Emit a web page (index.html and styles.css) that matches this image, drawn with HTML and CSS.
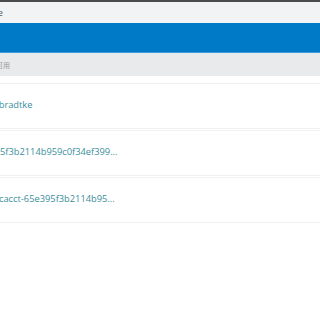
FILE: index.html
```html
<!DOCTYPE html>
<html lang="zh-CN">
<head>
  <meta charset="UTF-8">
  <meta name="viewport" content="width=device-width, initial-scale=1.0">
  <title>Accounts</title>
  <link rel="stylesheet" href="styles.css">
</head>

<body>
  <div class="window-edge"></div>
  <div class="title-bar">
    <span class="title">Service</span>
  </div>
  <div class="nav-bar"></div>
  <div class="sub-bar">
    <span class="hint">可用</span>
  </div>

  <ul class="account-list">
    <li class="account">
      <span class="account-name name-1">hbradtke</span>
    </li>
    <li class="account">
      <span class="account-name name-2">5f3b2114b959c0f34ef399...</span>
    </li>
    <li class="account">
      <span class="account-name name-3">cacct-65e395f3b2114b95...</span>
    </li>
  </ul>
</body>
</html>
```

FILE: styles.css
```css
* {
  margin: 0;
  padding: 0;
  box-sizing: border-box;
}

body {
  font-family: 'Open Sans', 'Noto Sans CJK SC', sans-serif;
  background-color: #fff;
  width: 320px;
  height: 320px;
  overflow: hidden;
}

.window-edge {
  height: 2px;
  background-color: #4b4b4b;
}

.title-bar {
  height: 21px;
  background-color: #f2f3f5;
  display: flex;
  align-items: center;
  overflow: hidden;
}

.title {
  font-size: 9px;
  color: #555;
  margin-left: -27px;
  white-space: nowrap;
}

.nav-bar {
  height: 30px;
  background-color: #0079c6;
  border-bottom: 1px solid #3d9bd9;
}

.sub-bar {
  height: 23px;
  background-color: #e9eaec;
  display: flex;
  align-items: center;
  overflow: hidden;
}

.hint {
  font-size: 7px;
  color: #9a9a9a;
  margin-left: -4px;
  white-space: nowrap;
}

.account-list {
  list-style: none;
  margin-top: 7px;
}

.account {
  height: 46px;
  padding-bottom: 3px;
  border-top: 1px solid #efefef;
  border-bottom: 1px solid #efefef;
  display: flex;
  align-items: center;
  overflow: hidden;
  margin-bottom: 1px;
}

.account + .account {
  border-top-color: #f2f2f2;
}

.account-name {
  font-size: 9.3px;
  color: #3a8e9c;
  white-space: nowrap;
}

.name-1 {
  margin-left: -7px;
}

.name-2 {
  margin-left: 0;
}

.name-3 {
  margin-left: -1px;
}
```
